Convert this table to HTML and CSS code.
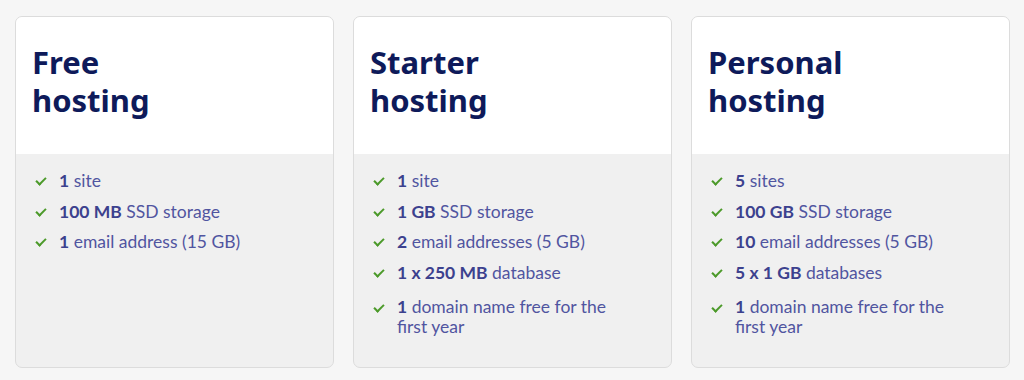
FILE: index.html
```html
<!DOCTYPE html>
<html lang="en">
<head>
    <meta charset="UTF-8">
    <meta name="viewport" content="width=device-width, initial-scale=1.0">
    <title>Hosting plans</title>
    <link rel="stylesheet" href="styles.css">
</head>
<body>
    <div class="plans">
        <div class="plan">
            <div class="plan-head">
                <h2>Free<br>hosting</h2>
            </div>
            <ul class="features">
                <li><b>1</b> site</li>
                <li><b>100 MB</b> SSD storage</li>
                <li><b>1</b> email address (15 GB)</li>
            </ul>
        </div>

        <div class="plan">
            <div class="plan-head">
                <h2>Starter<br>hosting</h2>
            </div>
            <ul class="features">
                <li><b>1</b> site</li>
                <li><b>1 GB</b> SSD storage</li>
                <li><b>2</b> email addresses (5 GB)</li>
                <li><b>1 x 250 MB</b> database</li>
                <li class="long"><b>1</b> <span>domain name free for the</span><br><span>first year</span></li>
            </ul>
        </div>

        <div class="plan">
            <div class="plan-head">
                <h2>Personal<br>hosting</h2>
            </div>
            <ul class="features">
                <li><b>5</b> sites</li>
                <li><b>100 GB</b> SSD storage</li>
                <li><b>10</b> email addresses (5 GB)</li>
                <li><b>5 x 1 GB</b> databases</li>
                <li class="long"><b>1</b> <span>domain name free for the</span><br><span>first year</span></li>
            </ul>
        </div>
    </div>
</body>
</html>
```

FILE: styles.css
```css
body {
    margin: 0;
    background-color: #f6f6f6;
    font-family: Lato, "Open Sans", sans-serif;
}
.plans {
    display: flex;
    gap: 19px;
    padding: 16px 14px 12px 15px;
    height: 380px;
    box-sizing: border-box;
}
.plan {
    width: 320px;
    display: flex;
    flex-direction: column;
    border: 1px solid #dcdcdc;
    border-radius: 7px;
    overflow: hidden;
    background-color: #f0f0f0;
}
.plan-head {
    background-color: #fff;
    height: 137px;
    padding: 26px 16px 0 16px;
    box-sizing: border-box;
}
h2 {
    margin: 0;
    font-family: "Noto Sans", sans-serif;
    font-size: 31px;
    line-height: 38px;
    font-weight: 700;
    color: #0e1a5a;
}
.features {
    list-style: none;
    margin: 0;
    padding: 16px 18px 0 43px;
    width: 240px;
}
.features li {
    position: relative;
    font-size: 17.5px;
    line-height: 21px;
    margin-bottom: 9.6px;
    color: #5055a0;
}
.features li.long {
    margin-top: 14px;
    line-height: 20px;
}
.features b {
    color: #3c418e;
}
.features li::before {
    content: "";
    position: absolute;
    left: -23px;
    top: 7px;
    width: 8px;
    height: 4px;
    border-left: 2px solid #4c9a2a;
    border-bottom: 2px solid #4c9a2a;
    transform: rotate(-45deg);
}
```
